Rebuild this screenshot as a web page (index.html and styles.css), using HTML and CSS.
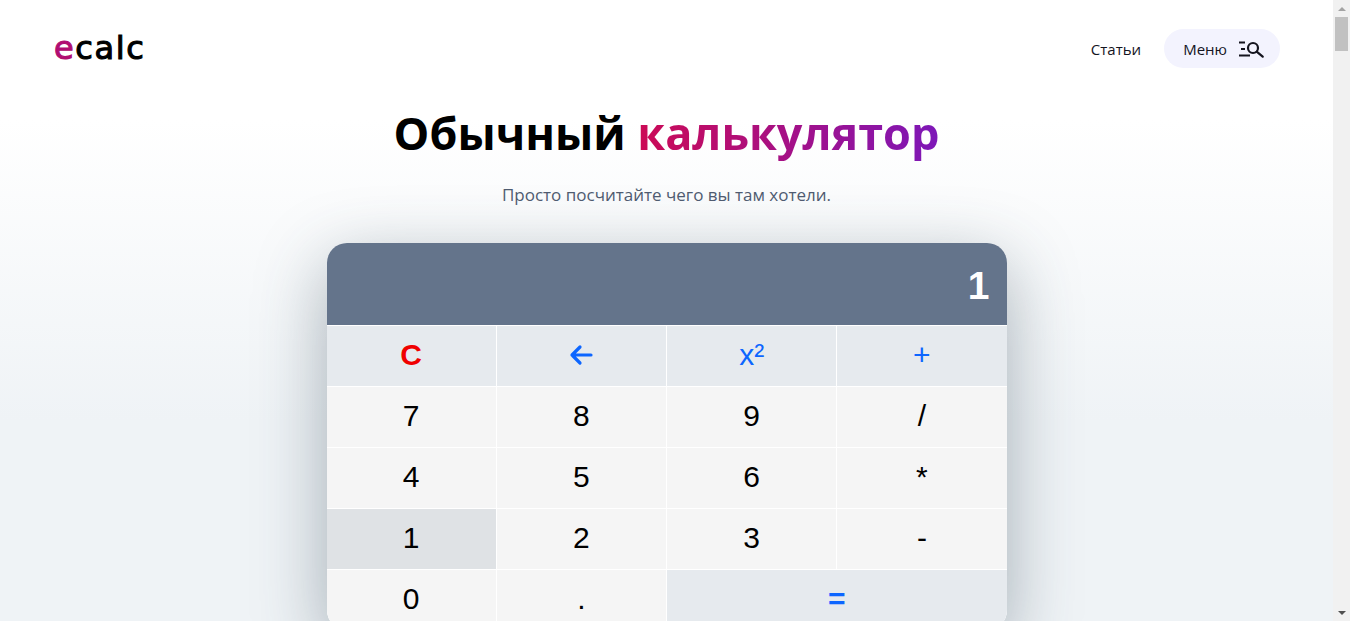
FILE: index.html
```html
<!DOCTYPE html>
<html lang="ru">

<head>
    <meta charset="UTF-8">
    <meta name="viewport" content="width=device-width, initial-scale=1.0">
    <title>Обычный калькулятор</title>
    <link rel="stylesheet" href="styles.css">
</head>

<body>
    <div class="page">
        <header class="site-header">
            <a class="logo" href="#"><span class="logo-e">e</span>calc</a>
            <nav class="site-nav">
                <a class="nav-link" href="#">Статьи</a>
                <button class="menu-btn">
                    Меню
                    <svg class="menu-icon" width="26" height="18" viewBox="0 0 26 18" fill="none" stroke="#14141e" stroke-width="2.2">
                        <path d="M0 2.5h6M2 9h4M0 15.5h11"/>
                        <circle cx="14" cy="8" r="5"/>
                        <path d="M17.7 11.7l6 5" stroke-linecap="round"/>
                    </svg>
                </button>
            </nav>
        </header>

        <main class="content">
            <h1 class="title">Обычный <span class="title-accent">калькулятор</span></h1>
            <p class="subtitle">Просто посчитайте чего вы там хотели.</p>

            <div class="calculator">
                <div class="display">1</div>
                <div class="keys">
                    <button class="key key-op key-clear">C</button>
                    <button class="key key-op key-blue">
                        <svg width="24" height="22" viewBox="0 0 24 22" fill="none" stroke="#0d66ff" stroke-width="3.2" stroke-linecap="round" stroke-linejoin="round">
                            <path d="M22 11H3M11 3l-8 8 8 8"/>
                        </svg>
                    </button>
                    <button class="key key-op key-blue">x²</button>
                    <button class="key key-op key-blue">+</button>
                    <button class="key">7</button>
                    <button class="key">8</button>
                    <button class="key">9</button>
                    <button class="key">/</button>
                    <button class="key">4</button>
                    <button class="key">5</button>
                    <button class="key">6</button>
                    <button class="key">*</button>
                    <button class="key key-active">1</button>
                    <button class="key">2</button>
                    <button class="key">3</button>
                    <button class="key">-</button>
                    <button class="key">0</button>
                    <button class="key">.</button>
                    <button class="key key-op key-blue key-equals">=</button>
                </div>
            </div>
        </main>
    </div>

    <div class="scrollbar">
        <span class="scroll-up"></span>
        <span class="scroll-thumb"></span>
        <span class="scroll-down"></span>
    </div>
</body>

</html>
```

FILE: styles.css
```css
html,
body {
    height: 100%;
}
body {
    margin: 0;
    display: flex;
    overflow: hidden;
    font-family: "Open Sans", "Noto Sans", sans-serif;
    color: #14141e;
    background: linear-gradient(180deg, #ffffff 0, #ffffff 120px, #eff3f6 420px, #eff3f6 100%);
}
.page {
    flex: 1;
    min-width: 0;
}
.site-header {
    display: flex;
    justify-content: space-between;
    align-items: center;
    padding: 29px 53px 0 54px;
    height: 39px;
}
.logo {
    margin-top: -2px;
    font-family: "DejaVu Sans", sans-serif;
    font-size: 32px;
    line-height: 36px;
    letter-spacing: 1.6px;
    -webkit-text-stroke: 1.1px #000000;
    color: #000000;
    text-decoration: none;
}
.logo-e {
    color: #b00d72;
    -webkit-text-stroke-color: #b00d72;
}
.title-accent {
    background: linear-gradient(90deg, #cc0a55, #7d17b8);
    -webkit-background-clip: text;
    background-clip: text;
    color: transparent;
}
.site-nav {
    display: flex;
    align-items: center;
    gap: 23px;
}
.nav-link {
    font-size: 15px;
    color: #14141e;
    text-decoration: none;
}
.menu-btn {
    display: flex;
    align-items: center;
    gap: 12px;
    height: 39px;
    padding: 0 15px 0 19px;
    border: none;
    border-radius: 20px;
    background-color: #f3f3fe;
    color: #14141e;
    font-family: inherit;
    font-size: 15px;
}
.content {
    text-align: center;
}
.title {
    margin: 37px 0 0;
    font-family: "Open Sans", sans-serif;
    font-size: 45px;
    font-weight: 700;
    line-height: 56px;
    color: #000000;
}
.subtitle {
    margin: 22px 0 0;
    font-size: 17px;
    line-height: 24px;
    color: #4f5b70;
}
.calculator {
    width: 680px;
    margin: 36px auto 0;
    border-radius: 20px;
    overflow: hidden;
    box-shadow: 0 20px 70px rgba(50, 70, 85, 0.4);
}
.display {
    height: 82px;
    padding: 0 17px;
    background-color: #64748b;
    color: #ffffff;
    font-family: "Liberation Sans", Arial, sans-serif;
    font-size: 39px;
    font-weight: 700;
    line-height: 85px;
    text-align: right;
}
.keys {
    display: grid;
    grid-template-columns: repeat(4, 1fr);
    grid-auto-rows: 60px;
    gap: 1px;
    padding-top: 1px;
    background-color: #ffffff;
}
.key {
    display: flex;
    align-items: center;
    justify-content: center;
    padding: 0 0 2px;
    border: none;
    background-color: #f5f5f5;
    color: #000000;
    font-family: "Liberation Sans", Arial, sans-serif;
    font-size: 30px;
}
.key-op {
    background-color: #e6eaee;
}
.key-blue {
    color: #0d66ff;
}
.key-clear {
    color: #f00000;
    font-weight: 700;
}
.key-active {
    background-color: #dfe2e5;
}
.key-equals {
    grid-column: span 2;
    font-weight: 700;
}
.scrollbar {
    flex: 0 0 17px;
    display: flex;
    flex-direction: column;
    background-color: #f1f1f1;
}
.scroll-up,
.scroll-down {
    height: 17px;
    display: flex;
    align-items: center;
    justify-content: center;
}
.scroll-up::before,
.scroll-down::before {
    content: "";
    border-left: 4px solid transparent;
    border-right: 4px solid transparent;
}
.scroll-up::before {
    border-bottom: 4px solid #a3a3a3;
}
.scroll-down::before {
    border-top: 4px solid #505050;
}
.scroll-thumb {
    height: 34px;
    margin: 0 2px;
    background-color: #c1c1c1;
}
.scroll-down {
    margin-top: auto;
}
```
